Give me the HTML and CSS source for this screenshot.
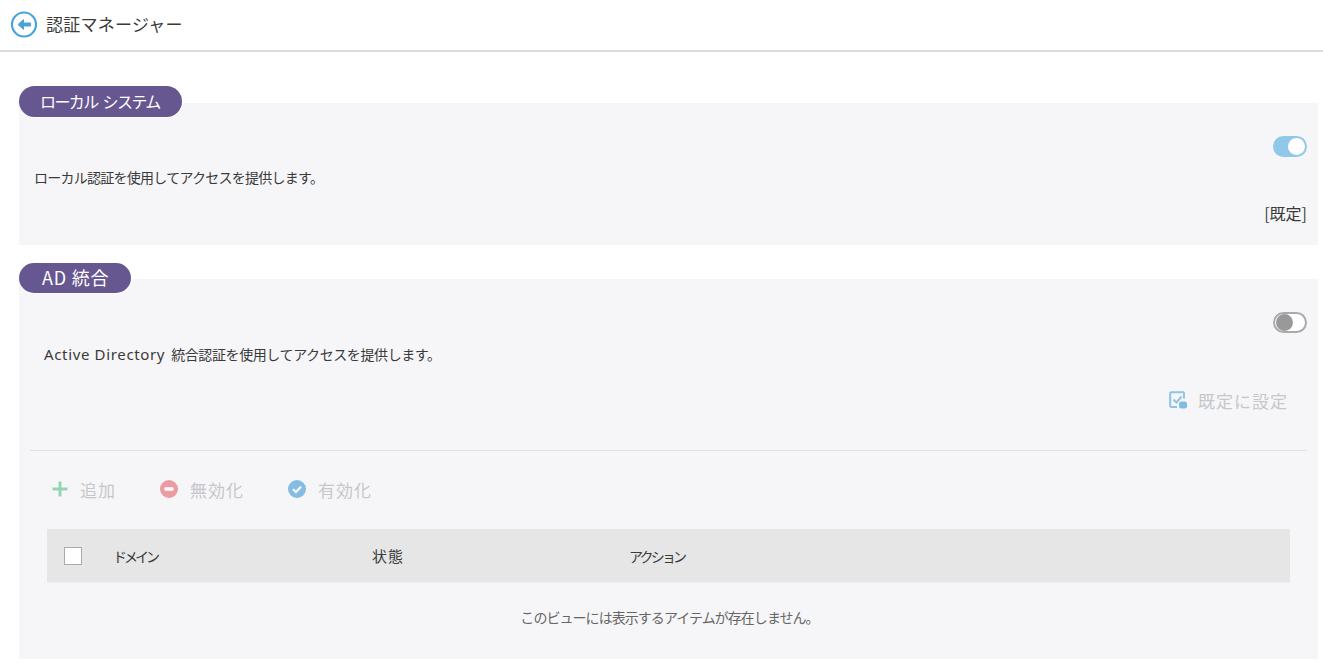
FILE: index.html
```html
<!DOCTYPE html>
<html lang="ja">
<head>
<meta charset="utf-8">
<title>認証マネージャー</title>
<link rel="stylesheet" href="styles.css">
</head>
<body>
<header class="topbar">
  <svg class="back" width="28" height="28" viewBox="0 0 28 28"><circle cx="14" cy="14.5" r="12" fill="#fff" stroke="#4ba3d6" stroke-width="2.2"/><path d="M8 14.5 L13.5 9.6 V13 H20.5 V16 H13.5 V19.4 Z" fill="#4ba3d6" stroke="#4ba3d6" stroke-width="1" stroke-linejoin="round"/></svg>
  <h1 class="title">認証マネージャー</h1>
</header>
<main class="content">
  <section class="section local">
    <h2 class="pill pill-local">ローカル システム</h2>
    <div class="panel panel-local">
      <div class="switch-row"><span class="switch on"><span class="knob"></span></span></div>
      <p class="desc desc-local">ローカル認証を使用してアクセスを提供します。</p>
      <div class="default-label">[既定]</div>
    </div>
  </section>
  <section class="section ad">
    <h2 class="pill pill-ad">AD 統合</h2>
    <div class="panel panel-ad">
      <div class="switch-row"><span class="switch off"><span class="knob"></span></span></div>
      <p class="desc desc-ad"><span class="latin">Active Directory</span>統合認証を使用してアクセスを提供します。</p>
      <div class="set-default">
        <svg width="20" height="20" viewBox="0 0 20 20"><path d="M16 8.5V3.2a1 1 0 0 0-1-1H3.2a1 1 0 0 0-1 1V16a1 1 0 0 0 1 1H9" fill="none" stroke="#8fc4e4" stroke-width="2"/><path d="M5.5 9.5l3 3 5-6" fill="none" stroke="#8fc4e4" stroke-width="2"/><rect x="11" y="11.5" width="8" height="7" rx="2.5" fill="#7dbce3"/></svg>
        <span>既定に設定</span>
      </div>
      <hr class="divider">
      <div class="toolbar">
        <div class="tool tool-add">
          <svg width="18" height="18" viewBox="0 0 18 18"><path d="M9 1.5v15M1.5 9h15" stroke="#96d3b2" stroke-width="3"/></svg>
          <span>追加</span>
        </div>
        <div class="tool tool-disable">
          <svg width="18" height="18" viewBox="0 0 18 18"><circle cx="9" cy="9" r="9" fill="#ec9aa3"/><rect x="4.5" y="7.2" width="9" height="3.6" rx="1" fill="#fff"/></svg>
          <span>無効化</span>
        </div>
        <div class="tool tool-enable">
          <svg width="18" height="18" viewBox="0 0 18 18"><circle cx="9" cy="9" r="9" fill="#83bde4"/><path d="M5 9.2l3 2.8 5-5.2" fill="none" stroke="#fff" stroke-width="2.2"/></svg>
          <span>有効化</span>
        </div>
      </div>
      <div class="table-head">
        <span class="check"></span>
        <span class="col col-domain">ドメイン</span>
        <span class="col col-state">状態</span>
        <span class="col col-action">アクション</span>
      </div>
      <div class="empty">このビューには表示するアイテムが存在しません。</div>
    </div>
  </section>
</main>
</body>
</html>
```
FILE: styles.css
```css
* { box-sizing: border-box; }
html, body { margin: 0; padding: 0; height: 100%; background: #fff; overflow: hidden; }
body {
  font-family: "Noto Sans CJK JP", "Noto Sans", sans-serif;
  color: #3a3a3a;
}
.topbar {
  height: 52px;
  border-bottom: 2px solid #dcdcdc;
  display: flex;
  align-items: center;
  padding: 0 0 2px 10px;
  gap: 8px;
}
.title { margin: 0 0 2px; font-size: 17px; font-weight: 400; color: #3a3a3a; line-height: 1; letter-spacing: 0.25px; }
.content { padding: 34px 5px 0 19px; }
.section { display: flow-root; }
.ad { margin-top: 18px; }
.pill {
  position: relative;
  z-index: 1;
  display: flex;
  align-items: center;
  margin: 0;
  border-radius: 16px;
  background: #665790;
  color: #fff;
  font-weight: 400;
  line-height: 1;
  white-space: nowrap;
  box-shadow: 0 0 0 1px #fff;
  padding-bottom: 2px;
}
.pill-local { height: 31px; margin-bottom: -14px; width: 163px; padding-left: 21px; font-size: 16px; letter-spacing: -1.6px; word-spacing: 3px; }
.pill-ad { height: 30px; margin-bottom: -14px; width: 112px; padding-left: 23px; font-size: 18px; letter-spacing: 0.8px; }
.panel { background: #f6f6f8; padding: 0 11px; }
.panel-local { height: 142px; }
.panel-ad { height: 380px; }
.switch-row { display: flex; justify-content: flex-end; padding-top: 33px; }
.switch {
  display: flex;
  align-items: center;
  width: 34px;
  height: 21px;
  border-radius: 11px;
  padding: 2px;
}
.switch.on { background: #8fc8e8; justify-content: flex-end; }
.switch.off { background: #fff; border: 2px solid #aaa; padding: 1px; }
.knob { width: 17px; height: 17px; border-radius: 50%; background: #fff; }
.off .knob { background: #999; }
.desc { margin: 0; font-size: 14px; line-height: 20px; color: #3a3a3a; white-space: nowrap; }
.desc-local { margin: 10px 0 0 4px; letter-spacing: -0.74px; }
.desc-ad { margin: 11px 0 0 14px; letter-spacing: -0.4px; }
.latin { font-family: "Noto Sans", sans-serif; font-size: 15px; letter-spacing: 0.65px; margin-right: 6px; }
.default-label { margin-top: 16px; text-align: right; font-size: 16px; line-height: 20px; }
.set-default {
  display: flex;
  justify-content: flex-end;
  align-items: center;
  gap: 10px;
  margin-top: 24px;
  padding-right: 19px;
  height: 24px;
  color: #c6c7cb;
  font-size: 17px;
  line-height: 1;
  letter-spacing: 1px;
}
.divider { border: 0; border-top: 1px solid #e2e2e2; margin: 38px 0 0; }
.toolbar { display: flex; margin-top: 26px; padding-left: 21px; height: 24px; }
.tool { display: flex; align-items: center; gap: 12px; color: #c6c7cb; font-size: 17px; letter-spacing: 1px; line-height: 1; }
.tool-add { gap: 11px; }
.tool-disable { margin-left: 44px; }
.tool-enable { margin-left: 44px; }
.table-head {
  display: flex;
  align-items: center;
  margin: 28px 17px 0;
  height: 54px;
  background: #e6e6e6;
  border-bottom: 1px solid #efefef;
  padding-left: 17px;
  font-size: 14px;
  color: #3a3a3a;
}
.check { width: 18px; height: 18px; background: #fff; border: 1px solid #aaa; flex: none; }
.col { display: block; white-space: nowrap; }
.col-domain { margin-left: 31px; width: 259px; letter-spacing: -3px; }
.col-state { width: 257px; font-size: 15px; letter-spacing: 1px; }
.col-action { letter-spacing: -2.8px; }
.empty {
  text-align: center;
  font-size: 14px;
  letter-spacing: -0.95px;
  color: #666;
  margin-top: 24px;
  line-height: 20px;
  padding-left: 2px;
}
```
